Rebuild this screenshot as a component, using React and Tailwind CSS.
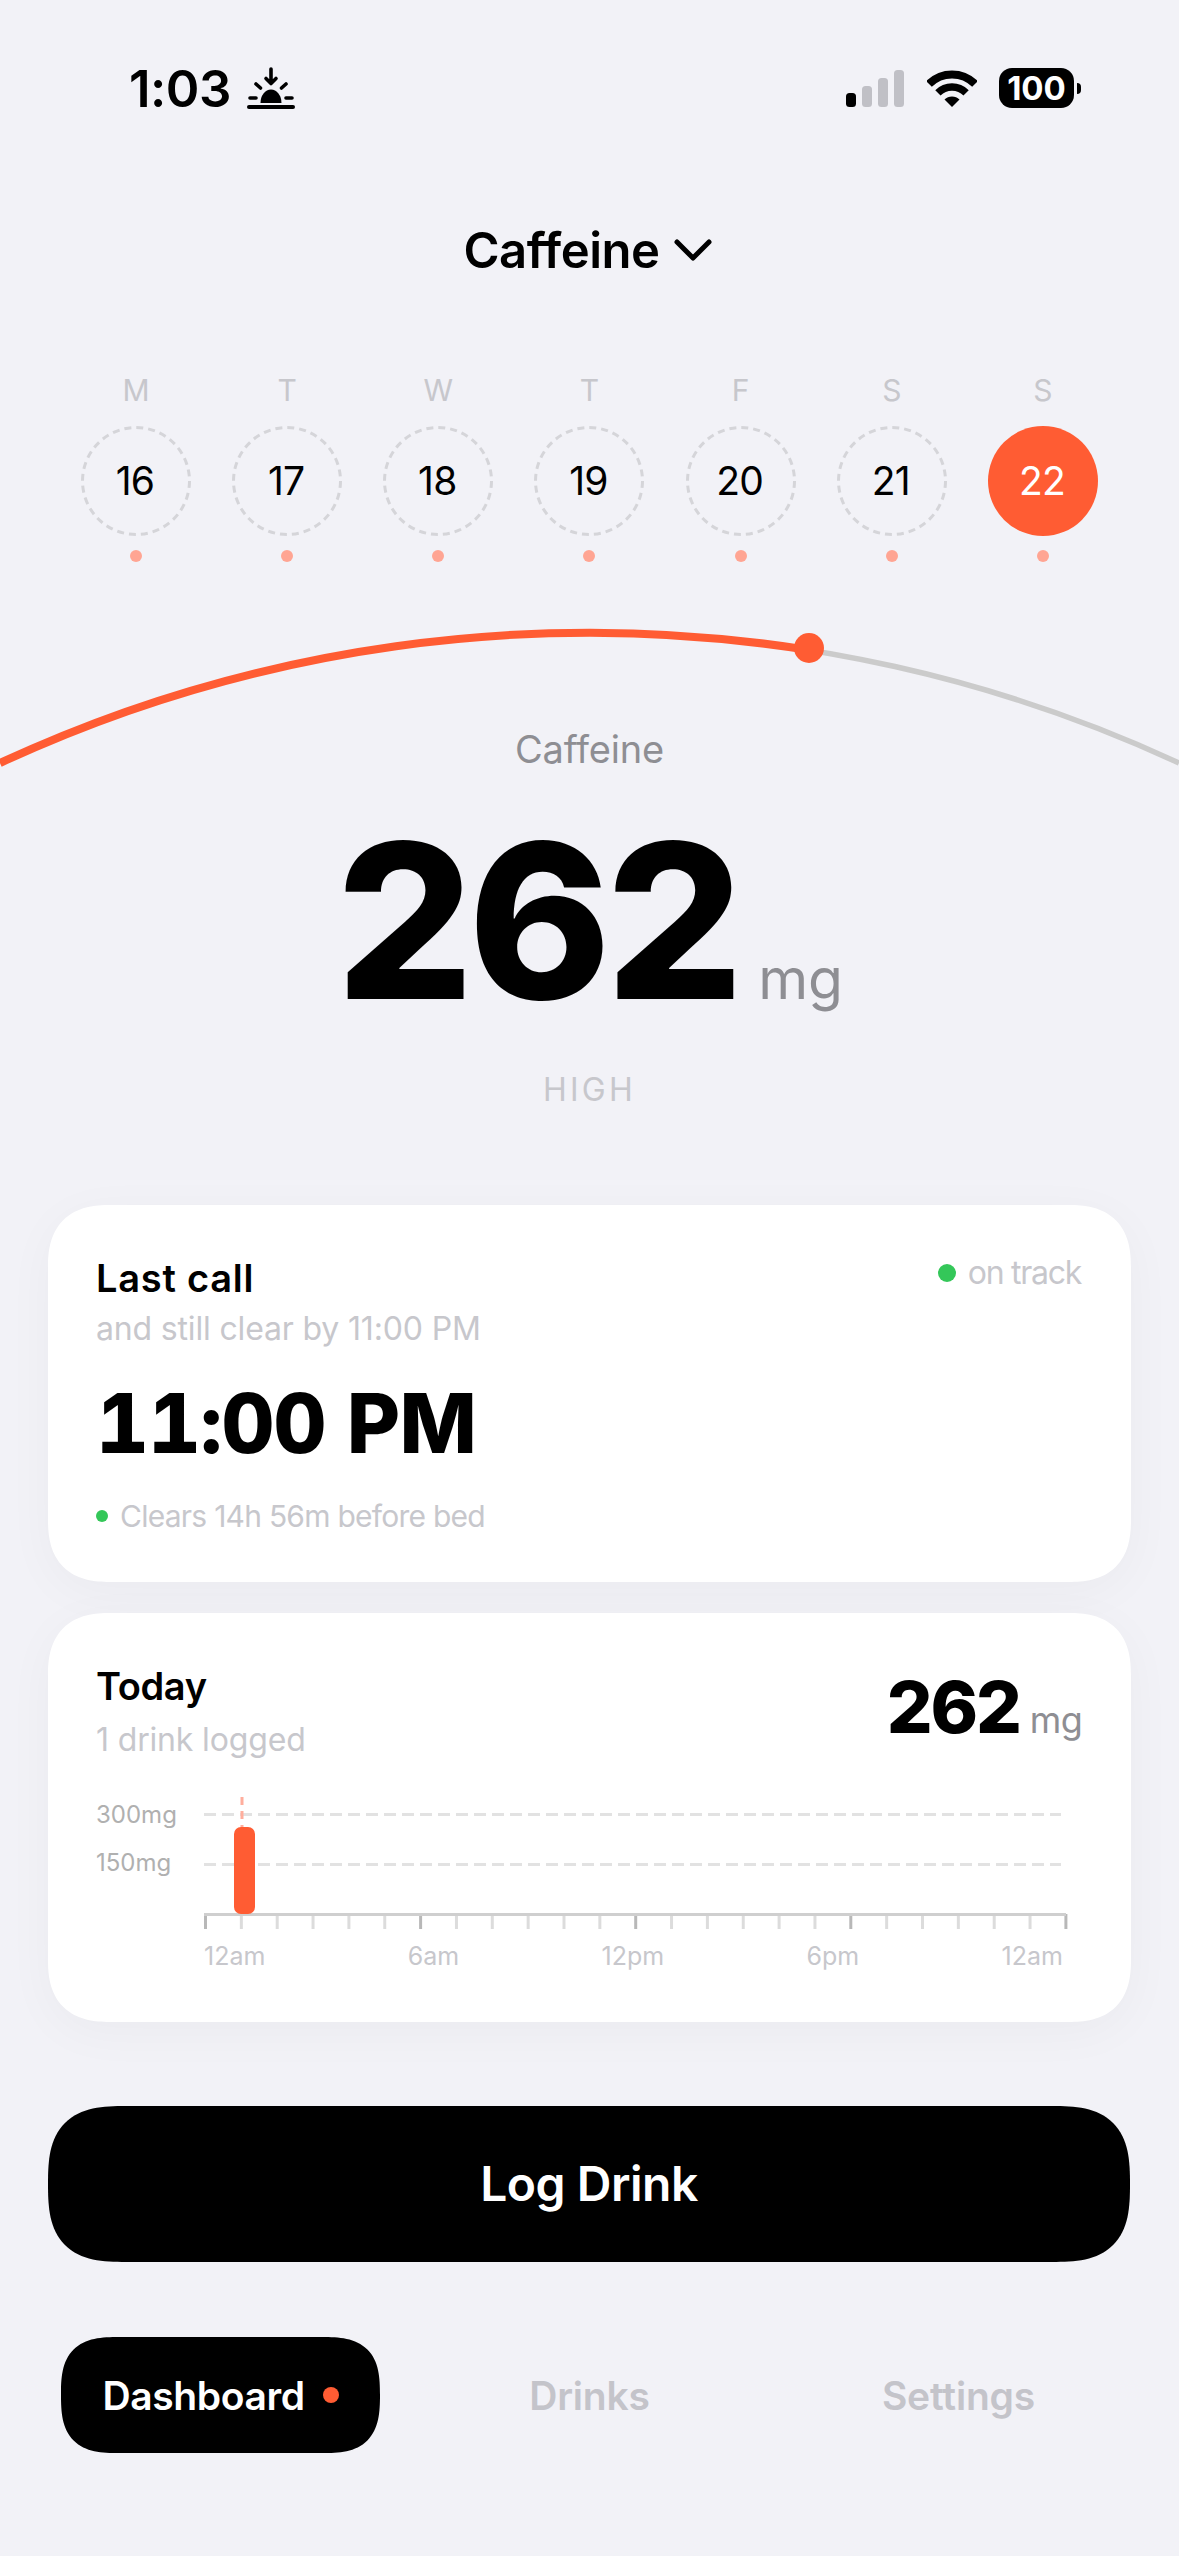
const days = [
  ['M', 16],
  ['T', 17],
  ['W', 18],
  ['T', 19],
  ['F', 20],
  ['S', 21],
  ['S', 22],
];

const ticks = Array.from({ length: 25 }, (_, i) => i);

function SunsetIcon() {
  return (
    <svg width="52" height="46" viewBox="0 0 52 46" fill="none" stroke="black" strokeLinecap="round">
      <path d="M26 4V18M21 13.5L26 18.5L31 13.5" strokeWidth="3.6" strokeLinejoin="round" />
      <path d="M15.5 38a10.5 13.5 0 0 1 21 0z" fill="black" stroke="none" />
      <path d="M5 33H11M41 33H47M11 19L15.5 23M41 19L36.5 23" strokeWidth="3.6" />
      <path d="M4 42H48" strokeWidth="4" />
    </svg>
  );
}

function SignalIcon() {
  return (
    <svg width="58" height="37" viewBox="0 0 58 37">
      <rect x="0" y="23" width="10" height="14" rx="3.5" fill="black" />
      <rect x="16" y="16" width="10" height="21" rx="3.5" fill="#c0c0c6" />
      <rect x="32" y="8" width="10" height="29" rx="3.5" fill="#c0c0c6" />
      <rect x="48" y="0" width="10" height="37" rx="3.5" fill="#c0c0c6" />
    </svg>
  );
}

function WifiIcon() {
  return (
    <svg width="50" height="37" viewBox="0 0 50 37" fill="none" stroke="black">
      <path d="M2 14A32.5 32.5 0 0 1 48 14" strokeWidth="8" />
      <path d="M10.9 22.9A20 20 0 0 1 39.1 22.9" strokeWidth="7.5" />
      <path d="M25 37L17.5 29.5A10.6 10.6 0 0 1 32.5 29.5Z" fill="black" stroke="none" />
    </svg>
  );
}

function StatusBar() {
  return (
    <div className="flex h-[46px] items-center justify-between pl-[129px] pr-[98px]">
      <div className="flex items-center gap-[14px]">
        <span className="text-[51px] font-semibold leading-none tracking-[-0.01em] text-black">1:03</span>
        <SunsetIcon />
      </div>
      <div className="flex items-center">
        <SignalIcon />
        <div className="ml-[23px]">
          <WifiIcon />
        </div>
        <div className="ml-[22px] flex h-[40px] w-[75px] items-center justify-center rounded-[13px] bg-black text-[33px] font-bold leading-none text-white">
          100
        </div>
        <div className="ml-[3px] h-[11px] w-[4px] rounded-r-full bg-black" />
      </div>
    </div>
  );
}

function DayColumn({ letter, num, active }) {
  return (
    <div className="flex w-[110px] flex-col items-center">
      <span className="text-[30px] leading-[36px] text-[#c7c7cc]">{letter}</span>
      {active ? (
        <div className="mt-[18px] flex h-[110px] w-[110px] items-center justify-center rounded-full bg-[#ff5c33] pb-[2px] pr-[2px] text-[39px] leading-none tracking-[-0.02em] text-white">
          {num}
        </div>
      ) : (
        <div className="relative mt-[18px] flex h-[110px] w-[110px] items-center justify-center pb-[2px] pr-[2px] text-[39px] leading-none tracking-[-0.02em] text-black">
          <svg className="absolute inset-0" width="110" height="110" viewBox="0 0 110 110" fill="none">
            <circle cx="55" cy="55" r="53.5" stroke="#d5d5d9" strokeWidth="3" strokeDasharray="7 5" />
          </svg>
          {num}
        </div>
      )}
      <div className="mt-[14px] h-[12px] w-[12px] rounded-full bg-[#ffa593]" />
    </div>
  );
}

function Hero() {
  return (
    <div className="relative mt-[20px] h-[623px]">
      {/* arc sits behind the label, bleeds off both sides */}
      <svg className="absolute left-0 top-0" width="1179" height="200" viewBox="0 0 1179 200" fill="none">
        <path d="M0 181A1400 1400 0 0 1 1179 181" stroke="#cbcbcb" strokeWidth="5.5" />
        <path d="M0 181A1400 1400 0 0 1 809 68" stroke="#ff5c33" strokeWidth="8" />
        <circle cx="809" cy="66" r="15" fill="#ff5c33" />
      </svg>
      <div className="flex flex-col items-center pt-[144px]">
        <span className="text-[38px] leading-[46px] tracking-[-0.005em] text-[#8e8e93]">Caffeine</span>
        <div className="mt-[39px] flex items-baseline">
          <span className="text-[216px] font-extrabold leading-[220px] tracking-[-0.025em] text-black">262</span>
          <span className="ml-[20px] text-[57px] leading-none text-[#8e8e93]">mg</span>
        </div>
        <span className="mt-[39px] text-[32px] leading-[40px] tracking-[0.1em] text-[#c7c7cc]">HIGH</span>
      </div>
    </div>
  );
}

function LastCallCard() {
  return (
    <div className="mx-[48px] h-[377px] rounded-[62px] bg-white pl-[48px] pr-[50px] pt-[51px] shadow-[0_10px_50px_rgba(0,0,0,0.035)] [corner-shape:superellipse(1.3)]">
      <div className="flex items-start justify-between">
        <div>
          <div className="text-[38px] font-semibold leading-[44px] tracking-[0.02em] text-black">Last call</div>
          <div className="mt-[9px] text-[32px] leading-[40px] tracking-[-0.005em] text-[#c7c7cc]">
            and still clear by 11:00 PM
          </div>
        </div>
        <div className="-mt-[3px] flex items-center gap-[12px]">
          <span className="h-[18px] w-[18px] rounded-full bg-[#34c759]" />
          <span className="text-[32px] leading-[40px] tracking-[-0.04em] text-[#c7c7cc]">on track</span>
        </div>
      </div>
      <div className="mt-[28px] text-[82px] font-extrabold leading-[94px] tracking-[-0.01em] text-black tabular-nums">11:00 PM</div>
      <div className="mt-[26px] flex items-center gap-[12px]">
        <span className="h-[12px] w-[12px] rounded-full bg-[#34c759]" />
        <span className="text-[30px] leading-[38px] tracking-[-0.025em] text-[#c7c7cc]">Clears 14h 56m before bed</span>
      </div>
    </div>
  );
}

function TodayChart() {
  return (
    <div className="mt-[15px] flex">
      <div className="w-[108px] pt-[25px]">
        <div className="text-[24px] leading-[30px] text-[#b0b0b0]">300mg</div>
        <div className="mt-[18px] text-[24px] leading-[30px] text-[#b0b0b0]">150mg</div>
      </div>
      <div className="w-[864px]">
        <svg className="block" width="864" height="154" viewBox="0 0 864 154" fill="none">
          <path d="M0 39.5H857M0 89.5H857" stroke="#e2e2e2" strokeWidth="3" strokeDasharray="12 6" />
          <path d="M38 22V52" stroke="#ffae9d" strokeWidth="3" strokeDasharray="8 6" />
          {ticks.map((i) => (
            <path
              key={i}
              d={`M${1.5 + i * 35.85} 139V154`}
              stroke={i % 6 === 0 ? '#b8b8b8' : '#dcdcdc'}
              strokeWidth="3"
            />
          ))}
          <path d="M0 139.5H862" stroke="#cfcfcf" strokeWidth="3" />
          <rect x="30" y="52" width="21" height="87" rx="7" fill="#ff5c33" />
        </svg>
        <div className="mt-[12px] flex w-[859px] justify-between text-[25px] leading-[30px] text-[#c7c7cc]">
          <span>12am</span>
          <span>6am</span>
          <span>12pm</span>
          <span>6pm</span>
          <span>12am</span>
        </div>
      </div>
    </div>
  );
}

function TodayCard() {
  return (
    <div className="mx-[48px] mt-[31px] h-[409px] rounded-[62px] bg-white pl-[48px] pr-[49px] pt-[51px] shadow-[0_10px_50px_rgba(0,0,0,0.035)] [corner-shape:superellipse(1.3)]">
      <div className="flex items-start justify-between">
        <div>
          <div className="text-[38px] font-semibold leading-[44px] tracking-[-0.01em] text-black">Today</div>
          <div className="mt-[12px] text-[32px] leading-[40px] tracking-[-0.005em] text-[#c7c7cc]">1 drink logged</div>
        </div>
        <div className="flex items-baseline pt-[3px]">
          <span className="text-[72px] font-extrabold leading-[80px] tracking-[-0.03em] text-black">262</span>
          <span className="ml-[10px] text-[36px] leading-none tracking-[-0.02em] text-[#8e8e93]">mg</span>
        </div>
      </div>
      <TodayChart />
    </div>
  );
}

function BottomNav() {
  return (
    <div className="mt-[75px] grid grid-cols-3 px-[36px]">
      <div className="flex justify-center">
        <div className="flex h-[116px] w-[319px] items-center justify-center gap-[18px] rounded-[58px] bg-black [corner-shape:superellipse(1.5)]">
          <span className="text-[39px] font-semibold leading-none tracking-[-0.01em] text-white">Dashboard</span>
          <span className="h-[16px] w-[16px] rounded-full bg-[#ff5c33]" />
        </div>
      </div>
      <div className="flex items-center justify-center text-[39px] font-semibold leading-none tracking-[-0.005em] text-[#c4c4ca]">
        Drinks
      </div>
      <div className="flex items-center justify-center text-[39px] font-semibold leading-none tracking-[-0.005em] text-[#c4c4ca]">
        Settings
      </div>
    </div>
  );
}

export default function App() {
  return (
    <div className="h-[2556px] w-[1179px] overflow-hidden bg-[#f2f2f7] pt-[65px] font-['Inter',sans-serif]">
      <StatusBar />
      <div className="mt-[109px] flex h-[60px] items-center justify-center gap-[15px] pr-[3px]">
        <span className="text-[49px] font-semibold leading-none tracking-[-0.01em] text-black">Caffeine</span>
        <svg width="38" height="24" viewBox="0 0 38 24" fill="none" stroke="black" strokeWidth="5" strokeLinecap="round" strokeLinejoin="round">
          <path d="M3 4L19 20L35 4" />
        </svg>
      </div>
      <div className="mt-[92px] flex justify-between px-[81px]">
        {days.map((d, i) => (
          <DayColumn key={i} letter={d[0]} num={d[1]} active={d[1] === 22} />
        ))}
      </div>
      <Hero />
      <LastCallCard />
      <TodayCard />
      <button className="mx-[48px] mt-[84px] flex h-[156px] w-[1082px] items-center justify-center rounded-[78px] bg-black text-[48px] font-semibold tracking-[-0.01em] text-white [corner-shape:superellipse(1.5)]">
        Log Drink
      </button>
      <BottomNav />
    </div>
  );
}
